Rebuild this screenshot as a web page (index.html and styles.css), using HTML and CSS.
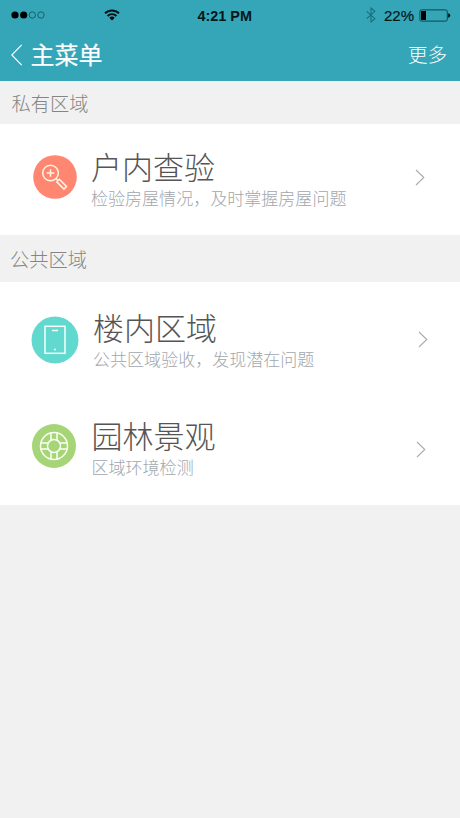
FILE: index.html
```html
<!DOCTYPE html>
<html lang="zh-CN">
<head>
<meta charset="utf-8">
<title>主菜单</title>
<link rel="stylesheet" href="styles.css">
</head>
<body>
<header class="header">
  <div class="status">
    <svg class="signal" width="35" height="8" viewBox="0 0 35 8"><circle cx="4" cy="4" r="3.6"/><circle cx="12.7" cy="4" r="3.6"/><g fill="none" stroke="#12515b" stroke-width=".8"><circle cx="21.3" cy="4" r="3.2"/><circle cx="30" cy="4" r="3.2"/></g></svg>
    <svg class="wifi" width="16" height="12" viewBox="0 0 16 12"><g fill="none" stroke="#03161a" stroke-width="1.9"><path d="M1 4.3a10 10 0 0 1 14 0"/><path d="M3.5 7a6.3 6.3 0 0 1 9 0"/></g><path d="M5.3 8.8a4 4 0 0 1 5.4 0L8 11.6z"/></svg>
    <span class="time">4:21 PM</span>
    <svg class="bluetooth" width="10" height="16" viewBox="0 0 10 16"><path d="M.7 4.3l8.2 7.4L5 15V1l3.9 3.3L.7 11.7" fill="none" stroke="#1b6d7d" stroke-width="1.1"/></svg>
    <span class="percent">22%</span>
    <svg class="battery" width="32" height="13" viewBox="0 0 32 13"><rect x=".9" y=".9" width="27.4" height="11.2" rx="1.5" fill="none" stroke="#0b4650" stroke-width="1"/><rect x="2" y="2" width="5" height="9"/><path d="M29.2 4.3q2 .4 2 2.2t-2 2.2z"/></svg>
  </div>
  <nav class="nav">
    <svg class="back" width="12" height="22" viewBox="0 0 12 22"><path d="M10.7.8L.8 11l9.9 10.2" fill="none" stroke="#fff" stroke-width="1.1"/></svg>
    <h1 class="nav-title">主菜单</h1>
    <span class="more">更多</span>
  </nav>
</header>
<main>
  <h2 class="section section-private">私有区域</h2>
  <div class="row row-inspect">
    <svg class="icon" width="44" height="44" viewBox="0 0 44 44"><circle cx="22" cy="22" r="21.8" fill="#ff8671"/><g fill="none" stroke="#fff5e2" stroke-width="1.5"><circle cx="17.5" cy="18" r="7.8"/><path d="M17.5 14.2v7.6M13.7 18h7.6M23.1 23.6l2 2M26.3 24.3l7.2 7.2-2.5 2.6-7.2-7.2z"/></g></svg>
    <div class="text"><h3 class="title">户内查验</h3><p class="sub">检验房屋情况，及时掌握房屋问题</p></div>
    <svg class="chevron" width="10" height="17" viewBox="0 0 10 17"><path d="M1 1l7.8 7.5L1 16"/></svg>
  </div>
  <h2 class="section section-public">公共区域</h2>
  <div class="row row-building">
    <svg class="icon" width="48" height="48" viewBox="0 0 48 48"><circle cx="24" cy="24" r="23.5" fill="#62d9cf"/><g fill="none" stroke="#f4fffc" stroke-width="1.5"><rect x="14" y="10.3" width="20" height="27"/><path d="M21 14.5h6"/></g><circle cx="24" cy="33.5" r="1" fill="#f4fffc"/></svg>
    <div class="text"><h3 class="title">楼内区域</h3><p class="sub">公共区域验收，发现潜在问题</p></div>
    <svg class="chevron" width="10" height="17" viewBox="0 0 10 17"><path d="M1 1l7.8 7.5L1 16"/></svg>
  </div>
  <div class="row row-garden">
    <svg class="icon" width="44" height="44" viewBox="0 0 44 44"><circle cx="22" cy="22" r="22" fill="#a6d578"/><g fill="none" stroke="#fbfff2" stroke-width="1.5"><circle cx="22" cy="22" r="13.5"/><circle cx="22" cy="22" r="6.5"/><path d="M19 8.8v7.4M25 8.8v7.4M19 27.8v7.4M25 27.8v7.4M8.8 19h7.4M8.8 25h7.4M27.8 19h7.4M27.8 25h7.4"/></g></svg>
    <div class="text"><h3 class="title">园林景观</h3><p class="sub">区域环境检测</p></div>
    <svg class="chevron" width="10" height="17" viewBox="0 0 10 17"><path d="M1 1l7.8 7.5L1 16"/></svg>
  </div>
</main>
</body>
</html>
```
FILE: styles.css
```css
* { box-sizing: border-box; }
body {
  margin: 0;
  min-height: 818px;
  background: #f1f1f1;
  font-family: "Noto Sans CJK SC", sans-serif;
  font-weight: 300;
}
h1, h2, h3, p { margin: 0; font-weight: inherit; white-space: nowrap; }
svg { display: block; flex: none; }
.header { height: 81px; background: #35a6b8; }
.status {
  display: flex;
  align-items: center;
  height: 30px;
  padding-left: 11px;
  font-family: "Liberation Sans", Arial, sans-serif;
  font-size: 15px;
  color: #03161a;
}
.wifi { margin-left: 57.5px; }
.time { width: 58px; margin-left: 78px; padding-top: 1px; font-weight: 700; font-size: 14.4px; white-space: nowrap; }
.bluetooth { margin-left: 110.5px; }
.percent { width: 31px; margin-left: 8px; font-weight: 400; -webkit-text-stroke: .2px #03161a; }
.battery { margin-left: 4px; }
.nav { display: flex; align-items: center; height: 47px; padding: 0 13px 0 11px; color: #fff; }
.back { margin-top: 2px; }
.nav-title { margin-left: 7.5px; font-size: 24px; line-height: 30px; font-weight: 400; -webkit-text-stroke: .2px #fff; }
.more { margin-left: auto; font-size: 19.5px; line-height: 28px; }
.section { font-size: 19.3px; color: #858585; }
.section-private { height: 43px; padding-left: 11.5px; line-height: 44px; }
.section-public { height: 47px; padding-left: 10px; line-height: 48px; }
.row { display: flex; align-items: flex-start; background: #fff; }
.row-inspect { height: 111px; padding: 25px 35px 0 32.5px; }
.row-building { height: 112px; padding: 28px 32px 0 30.5px; }
.row-garden { height: 111px; padding: 24px 34px 0 32px; }
.icon { margin-top: 6px; }
.row-inspect .icon { margin-top: 6px; }
.text { margin-left: 14.5px; }
.row-garden .text { margin-left: 15.5px; }
.title { font-size: 31px; line-height: 34px; padding-bottom: 1px; color: #555; }
.sub { font-size: 17.05px; line-height: 27px; color: #a2a7ac; }
.chevron { margin: 20px 0 0 auto; fill: none; stroke: #aaa; stroke-width: 1.1; }
.row-building .chevron { margin-top: 21px; }
.row-garden .chevron { margin-top: 23px; }
```
